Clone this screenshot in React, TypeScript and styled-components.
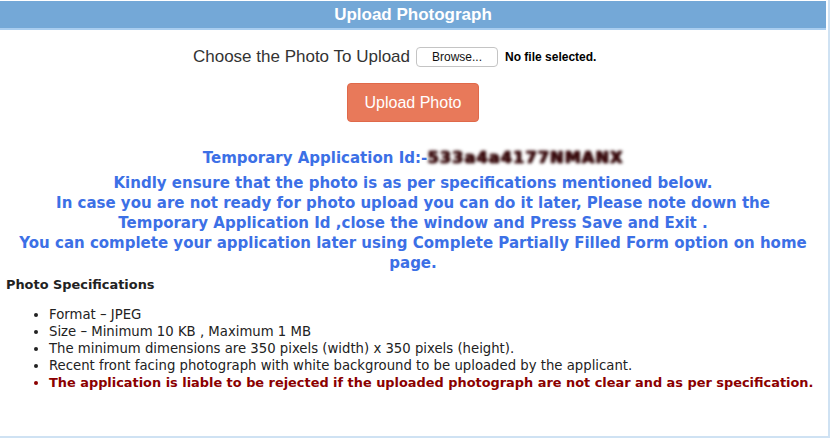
import styled, { createGlobalStyle } from "styled-components";

const GlobalStyle = createGlobalStyle`
  html, body {
    margin: 0;
    padding: 0;
    background: #ffffff;
  }
`;

const specs = [
  "Format \u2013 JPEG",
  "Size \u2013 Minimum 10 KB , Maximum 1 MB",
  "The minimum dimensions are 350 pixels (width) x 350 pixels (height).",
  "Recent front facing photograph with white background to be uploaded by the applicant.",
];

const App = () => {
  return (
    <>
      <GlobalStyle />
      <Panel>
        <PanelHeader>Upload Photograph</PanelHeader>
        <ChooseRow>
          <ChooseLabel>Choose the Photo To Upload</ChooseLabel>
          <BrowseButton type="button">Browse...</BrowseButton>
          <FileStatus>No file selected.</FileStatus>
        </ChooseRow>
        <ButtonRow>
          <UploadButton type="button">Upload Photo</UploadButton>
        </ButtonRow>
        <Notice>
          <TempId>
            Temporary Application Id:-<Blurred>533a4a4177NMANX</Blurred>
          </TempId>
          <NoticeText>
            Kindly ensure that the photo is as per specifications mentioned
            below.
            <br />
            In case you are not ready for photo upload you can do it later,
            Please note down the Temporary Application Id ,close the window and
            Press Save and Exit .
            <br />
            You can complete your application later using Complete Partially
            Filled Form option on home page.
          </NoticeText>
        </Notice>
        <SpecTitle>Photo Specifications</SpecTitle>
        <SpecList>
          {specs.map((s) => (
            <SpecItem key={s}>{s}</SpecItem>
          ))}
          <SpecItem $warning>
            The application is liable to be rejected if the uploaded photograph
            are not clear and as per specification.
          </SpecItem>
        </SpecList>
      </Panel>
    </>
  );
};

export default App;

const Panel = styled.div`
  box-sizing: border-box;
  width: 830px;
  height: 438px;
  padding: 1px 2px 0 0;
  border-right: 2px solid #cfe2f3;
  border-bottom: 2px solid #cfe2f3;
  background: #ffffff;
`;

const PanelHeader = styled.div`
  height: 27px;
  line-height: 27px;
  background: #74a8d7;
  border-bottom: 2px solid #a9cdef;
  color: #ffffff;
  text-align: center;
  font-family: "Liberation Sans", Arial, sans-serif;
  font-weight: bold;
  font-size: 17px;
`;

const ChooseRow = styled.div`
  display: flex;
  justify-content: center;
  align-items: center;
  margin-top: 17px;
  height: 20px;
  padding-left: 2px;
`;

const ChooseLabel = styled.span`
  margin-right: 6px;
  font-family: "Liberation Sans", Arial, sans-serif;
  font-size: 17px;
  color: #333333;
`;

const BrowseButton = styled.button`
  box-sizing: border-box;
  width: 82px;
  height: 20px;
  padding: 0;
  margin-right: 7px;
  background: #ffffff;
  border: 1px solid #c4c4c4;
  border-radius: 4px;
  font-family: "Liberation Sans", Arial, sans-serif;
  font-size: 12px;
  color: #111111;
`;

/* the file input keeps empty room after its status text */
const FileStatus = styled.span`
  width: 130px;
  font-family: "Liberation Sans", Arial, sans-serif;
  font-size: 12px;
  font-weight: bold;
  color: #000000;
`;

const ButtonRow = styled.div`
  display: flex;
  justify-content: center;
  margin-top: 16px;
`;

const UploadButton = styled.button`
  box-sizing: border-box;
  width: 132px;
  height: 39px;
  background: #e8795a;
  border: 1px solid #e0694a;
  border-radius: 4px;
  color: #ffffff;
  font-family: "Liberation Sans", Arial, sans-serif;
  font-size: 16px;
`;

const Notice = styled.div`
  margin-top: 26px;
  padding: 0 10px;
  text-align: center;
  color: #3c70e6;
  font-family: "DejaVu Sans", Verdana, sans-serif;
  font-weight: bold;
`;

const TempId = styled.div`
  font-size: 15px;
  line-height: 20px;
  margin-bottom: 5px;
`;

const Blurred = styled.span`
  display: inline-block;
  color: #3a070a;
  font-size: 16px;
  letter-spacing: 1.2px;
  filter: blur(1.4px);
  text-shadow: 0 0 2px #2a0505, 1px 0 1px #1a0505;
`;

const NoticeText = styled.div`
  font-size: 15px;
  line-height: 20px;
`;

const SpecTitle = styled.div`
  margin: 4px 0 0 6px;
  font-family: "DejaVu Sans", Verdana, sans-serif;
  font-weight: bold;
  font-size: 12.9px;
  color: #222222;
  line-height: 16px;
`;

const SpecList = styled.ul`
  margin: 13px 0 0;
  padding-left: 49px;
  font-family: "DejaVu Sans", Verdana, sans-serif;
  font-size: 13.25px;
  line-height: 17px;
`;

const SpecItem = styled.li<{ $warning?: boolean }>`
  color: ${(p) => (p.$warning ? "#8b0000" : "#222222")};
  font-weight: ${(p) => (p.$warning ? "bold" : "normal")};
  font-size: ${(p) => (p.$warning ? "12.9px" : "13.25px")};
`;
